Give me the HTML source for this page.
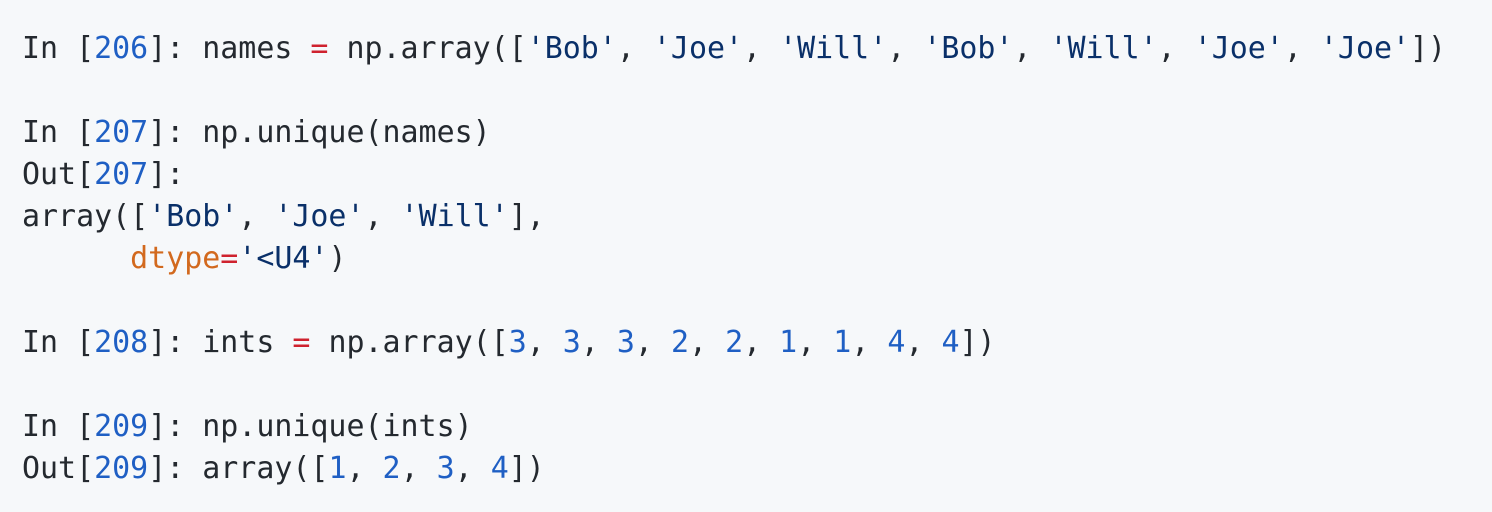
<!DOCTYPE html>
<html><head><style>
html,body{margin:0;padding:0;background:#f6f8fa;width:1492px;height:512px;overflow:hidden}
pre{margin:0;padding:28px 0 0 22px;font-family:"DejaVu Sans Mono","Liberation Mono",monospace;font-size:29.95px;line-height:42px;color:#24292f}
.n{color:#1f5fc4}.s{color:#0a3069}.o{color:#cf222e}.k{color:#d2691e}
</style></head><body>
<pre>In [<span class="n">206</span>]: names <span class="o">=</span> np.array([<span class="s">'Bob'</span>, <span class="s">'Joe'</span>, <span class="s">'Will'</span>, <span class="s">'Bob'</span>, <span class="s">'Will'</span>, <span class="s">'Joe'</span>, <span class="s">'Joe'</span>])

In [<span class="n">207</span>]: np.unique(names)
Out[<span class="n">207</span>]:
array([<span class="s">'Bob'</span>, <span class="s">'Joe'</span>, <span class="s">'Will'</span>],
      <span class="k">dtype</span><span class="o">=</span><span class="s">'&lt;U4'</span>)

In [<span class="n">208</span>]: ints <span class="o">=</span> np.array([<span class="n">3</span>, <span class="n">3</span>, <span class="n">3</span>, <span class="n">2</span>, <span class="n">2</span>, <span class="n">1</span>, <span class="n">1</span>, <span class="n">4</span>, <span class="n">4</span>])

In [<span class="n">209</span>]: np.unique(ints)
Out[<span class="n">209</span>]: array([<span class="n">1</span>, <span class="n">2</span>, <span class="n">3</span>, <span class="n">4</span>])</pre>
</body></html>
